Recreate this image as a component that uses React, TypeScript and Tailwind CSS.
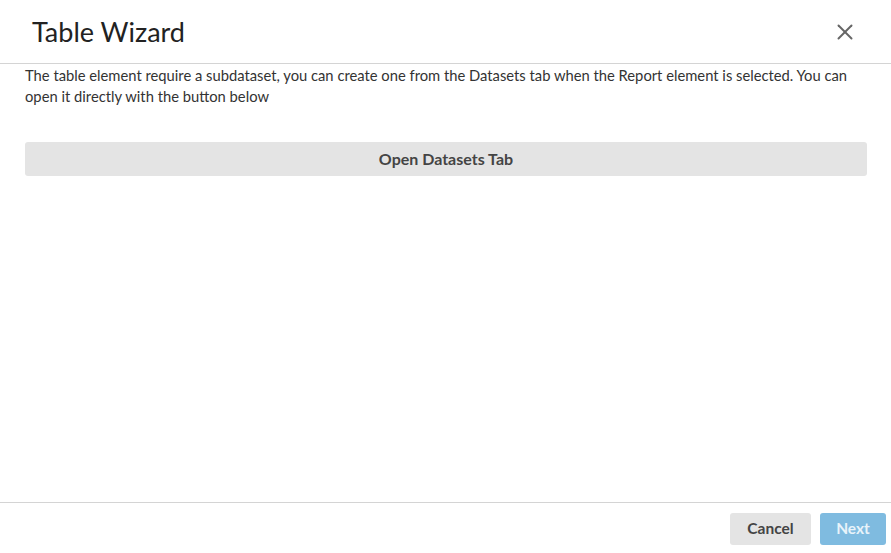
import { X } from "lucide-react";

export default function App() {
  return (
    <div
      className="flex h-[553px] w-[891px] flex-col bg-white text-[#333]"
      style={{ fontFamily: "Lato, 'Open Sans', sans-serif" }}
    >
      <div className="flex h-[64px] shrink-0 items-center justify-between border-b border-[#d4d4d4] pl-[32px] pr-[33px]">
        <h2 className="text-[27px] leading-none text-[#222]">Table Wizard</h2>
        <button className="text-[#666]">
          <X size={26} strokeWidth={1.8} />
        </button>
      </div>

      <div className="flex flex-1 flex-col pl-[25px] pr-[24px] pt-[1px]">
        <p className="text-[14.75px] leading-[21px] text-[#333]">
          The table element require a subdataset, you can create one from the Datasets tab when the Report element is
          selected. You can open it directly with the button below
        </p>
        <button className="mt-[35px] h-[34px] w-full rounded-[3px] bg-[#e4e4e4] text-[16px] font-bold text-[#444]">
          Open Datasets Tab
        </button>
      </div>

      <div className="flex h-[51px] shrink-0 items-start justify-end gap-[9px] border-t border-[#d4d4d4] pr-[5px] pt-[10px]">
        <button className="h-[32px] w-[81px] rounded-[3px] bg-[#e4e4e4] text-[15.5px] font-bold text-[#444]">
          Cancel
        </button>
        <button className="h-[32px] w-[66px] rounded-[3px] bg-[#7fbbe0] text-[15.5px] font-bold text-[#e8f3fa]">
          Next
        </button>
      </div>
    </div>
  );
}
